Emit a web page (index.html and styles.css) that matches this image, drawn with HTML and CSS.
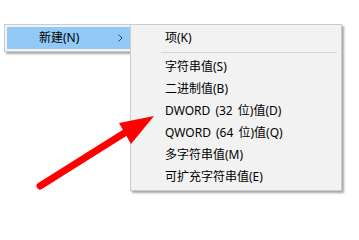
FILE: index.html
```html
<!DOCTYPE html>
<html lang="zh-CN">
<head>
<meta charset="utf-8">
<link rel="stylesheet" href="styles.css">
</head>
<body>
<div class="desk">
  <div class="menu main-menu">
    <div class="item active">
      <span class="label">新建(N)</span>
      <svg class="chev" width="5" height="8" viewBox="0 0 5 8"><path d="M0.5 0.5 L4 4 L0.5 7.5" fill="none" stroke="#444" stroke-width="1"/></svg>
    </div>
  </div>
  <div class="menu sub-menu">
    <div class="item"><span class="label">项(K)</span></div>
    <div class="sep"></div>
    <div class="item"><span class="label">字符串值(S)</span></div>
    <div class="item"><span class="label">二进制值(B)</span></div>
    <div class="item"><span class="label">DWORD (32 位)值(D)</span></div>
    <div class="item"><span class="label">QWORD (64 位)值(Q)</span></div>
    <div class="item"><span class="label">多字符串值(M)</span></div>
    <div class="item"><span class="label">可扩充字符串值(E)</span></div>
  </div>
  <svg class="pointer" width="359" height="218" viewBox="0 0 359 218">
    <line x1="40" y1="186" x2="126" y2="132" stroke="#ff0000" stroke-width="7" stroke-linecap="round"/>
    <polygon points="154,116 119,123 131,144" fill="#ff0000"/>
  </svg>
</div>
</body>
</html>
```

FILE: styles.css
```css
html, body {
  margin: 0;
  padding: 0;
  background: #ffffff;
}
body {
  width: 359px;
  height: 218px;
  overflow: hidden;
  font-family: "Noto Sans", "Noto Sans CJK SC", sans-serif;
  font-size: 12px;
  color: #000;
}
.desk {
  position: relative;
  width: 359px;
  height: 218px;
  display: flex;
  align-items: flex-start;
  padding: 24px 0 0 4px;
  box-sizing: border-box;
}
.menu {
  background: #f2f2f2;
  border: 1px solid #cccccc;
  padding: 2px;
  box-shadow: 2px 2px 2px rgba(0, 0, 0, 0.35);
}
.main-menu {
  width: 123px;
}
.sub-menu {
  width: 206px;
  margin-left: -3px;
  position: relative;
  z-index: 1;
}
.item {
  height: 22px;
  display: flex;
  align-items: center;
  padding-left: 32px;
  line-height: 22px;
  white-space: nowrap;
  word-spacing: 2px;
}
.active {
  background: #91c9f7;
}
.chev {
  margin-left: auto;
  margin-right: 7px;
}
.sep {
  height: 1px;
  background: #d7d7d7;
  margin: 3px 2px 3px 28px;
}
.pointer {
  position: absolute;
  left: 0;
  top: 0;
  z-index: 2;
  pointer-events: none;
}
```
